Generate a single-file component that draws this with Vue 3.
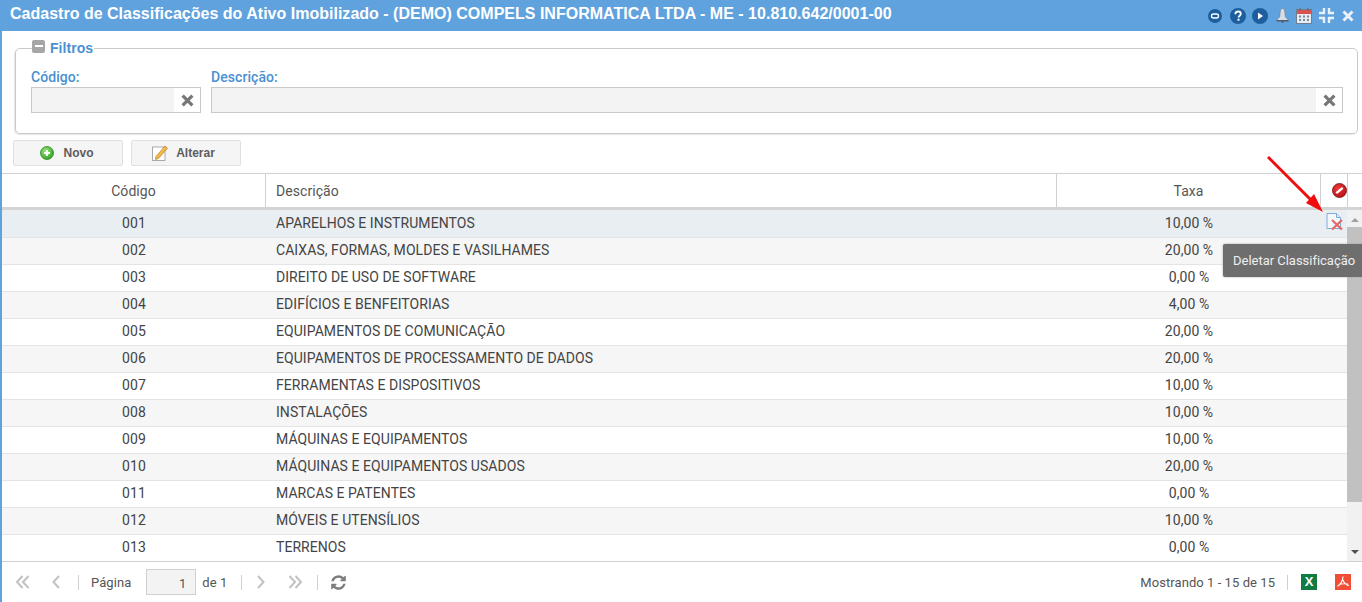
<script setup>
const rows = [
  ['001', 'APARELHOS E INSTRUMENTOS', '10,00 %'],
  ['002', 'CAIXAS, FORMAS, MOLDES E VASILHAMES', '20,00 %'],
  ['003', 'DIREITO DE USO DE SOFTWARE', '0,00 %'],
  ['004', 'EDIFÍCIOS E BENFEITORIAS', '4,00 %'],
  ['005', 'EQUIPAMENTOS DE COMUNICAÇÃO', '20,00 %'],
  ['006', 'EQUIPAMENTOS DE PROCESSAMENTO DE DADOS', '20,00 %'],
  ['007', 'FERRAMENTAS E DISPOSITIVOS', '10,00 %'],
  ['008', 'INSTALAÇÕES', '10,00 %'],
  ['009', 'MÁQUINAS E EQUIPAMENTOS', '10,00 %'],
  ['010', 'MÁQUINAS E EQUIPAMENTOS USADOS', '20,00 %'],
  ['011', 'MARCAS E PATENTES', '0,00 %'],
  ['012', 'MÓVEIS E UTENSÍLIOS', '10,00 %'],
  ['013', 'TERRENOS', '0,00 %']
]
</script>

<template>
  <div class="app">
    <header class="titlebar">
      <h1>Cadastro de Classificações do Ativo Imobilizado - (DEMO) COMPELS INFORMATICA LTDA - ME - 10.810.642/0001-00</h1>
      <div class="tools">
        <svg width="14" height="14" viewBox="0 0 14 14"><circle cx="7" cy="7" r="7" fill="#1d5f9e"/><rect x="3.500" y="5" width="7" height="4" rx="2" fill="none" stroke="#fff" stroke-width="1.300"/></svg>
        <svg width="16" height="16" viewBox="0 0 16 16"><circle cx="8" cy="8" r="8" fill="#1d5f9e"/><path d="M5.300 6.200C5.400 4.400 6.600 3.500 8.100 3.500c1.600 0 2.700 1 2.700 2.300 0 2-2.200 1.900-2.200 3.800" fill="none" stroke="#fff" stroke-width="1.800"/><rect x="7.500" y="10.700" width="2" height="2" fill="#fff"/></svg>
        <svg width="16" height="16" viewBox="0 0 16 16"><circle cx="8" cy="8" r="8" fill="#1d5f9e"/><path d="M6 4.500L11 8 6 11.500z" fill="#fff"/></svg>
        <svg width="13" height="15" viewBox="0 0 13 15"><path d="M6.500 .5c1.400 0 2.100 1 2.300 3l.6 5.500 2.600 2.500v1H1v-1L3.600 9l.6-5.500c.2-2 .9-3 2.300-3z" fill="#d5dde6" stroke="#687c92" stroke-width=".7"/><rect x=".5" y="12" width="12" height="1.500" fill="#4d5d70"/><circle cx="6.500" cy="14" r="1" fill="#4d5d70"/></svg>
        <svg width="16" height="16" viewBox="0 0 16 16"><rect x=".5" y="1.500" width="15" height="14" fill="#e8edf2" stroke="#6f7f92"/><rect x="1" y="2" width="14" height="4" fill="#d9534f"/><path d="M3.500 0h1v3h-1zM11.500 0h1v3h-1z" fill="#5b6b7d"/><path d="M3 7.500h2v2H3zM7 7.500h2v2H7zM11 7.500h2v2h-2zM3 11h2v2H3zM7 11h2v2H7zM11 11h2v2h-2z" fill="#7b8a9b"/></svg>
        <svg width="15" height="15" viewBox="0 0 15 15"><path d="M5 0v5H0M10 0v5h5M5 15v-5H0M10 15v-5h5" fill="none" stroke="#e9f2fb" stroke-width="2.400"/></svg>
        <svg width="12" height="12" viewBox="0 0 12 12"><path d="M1.500 1.500l9 9M10.500 1.500l-9 9" stroke="#e9f2fb" stroke-width="3"/></svg>
      </div>
    </header>

    <main class="content">
      <fieldset class="filters">
        <legend>
          <span class="collapse"><i></i></span>
          <span>Filtros</span>
        </legend>
        <div class="field code">
          <label>Código:</label>
          <div class="input">
            <span class="box"></span>
            <span class="clear"><svg width="13" height="13" viewBox="0 0 12 12"><path d="M1.500 1.500l9 9M10.500 1.500l-9 9" stroke="#777" stroke-width="3"/></svg></span>
          </div>
        </div>
        <div class="field desc">
          <label>Descrição:</label>
          <div class="input">
            <span class="box"></span>
            <span class="clear"><svg width="13" height="13" viewBox="0 0 12 12"><path d="M1.500 1.500l9 9M10.500 1.500l-9 9" stroke="#777" stroke-width="3"/></svg></span>
          </div>
        </div>
      </fieldset>

      <div class="actions">
        <button type="button" class="btn-new">
          <svg width="14" height="14" viewBox="0 0 14 14"><defs><radialGradient id="gn" cx=".4" cy=".35" r=".7"><stop offset="0" stop-color="#9be77f"/><stop offset="1" stop-color="#2f9c22"/></radialGradient></defs><circle cx="7" cy="7" r="6.500" fill="url(#gn)" stroke="#2b8a22" stroke-width=".8"/><path d="M7 4v6M4 7h6" stroke="#fff" stroke-width="2"/></svg>
          <span>Novo</span>
        </button>
        <button type="button" class="btn-edit">
          <svg width="16" height="16" viewBox="0 0 16 16"><rect x=".5" y="2" width="12.500" height="13.500" fill="#fff" stroke="#a9a9a9"/><path d="M4 11.500L13 1l2.500 2.200-9 10.300-3 1z" fill="#f0b94a" stroke="#b77f22" stroke-width=".7"/></svg>
          <span>Alterar</span>
        </button>
      </div>

      <section class="grid">
        <div class="grid-head">
          <div class="c-code">Código</div>
          <div class="c-desc">Descrição</div>
          <div class="c-tax">Taxa</div>
          <div class="c-act"><svg width="15" height="15" viewBox="0 0 15 15"><defs><radialGradient id="rd" cx=".4" cy=".35" r=".75"><stop offset="0" stop-color="#f03a3a"/><stop offset="1" stop-color="#b40d12"/></radialGradient></defs><circle cx="7.500" cy="7.500" r="7" fill="url(#rd)" stroke="#6d1013" stroke-width=".8"/><path d="M4.300 10.200L10.700 4.800" stroke="#fff" stroke-width="2.400"/></svg></div>
          <div class="c-end"></div>
        </div>
        <div class="grid-body">
          <div class="rows">
            <div v-for="(r, i) in rows" :key="r[0]" class="row" :class="{ alt: i % 2 === 1, sel: i === 0 }">
              <div class="c-code">{{ r[0] }}</div>
              <div class="c-desc">{{ r[1] }}</div>
              <div class="c-tax">{{ r[2] }}</div>
              <div class="c-act">
                <svg v-if="i === 0" width="17" height="17" viewBox="0 0 17 17"><path d="M1 .5h9.500l4 4V15.500H1z" fill="#f4f8fd" stroke="#7eaad8"/><path d="M10.500 .5v4h4" fill="#dce9f7" stroke="#7eaad8"/><path d="M6 7l10 9.500M16 7L6 16.500" stroke="#e06a6a" stroke-width="2.300"/></svg>
              </div>
            </div>
          </div>
          <div class="scrollbar">
            <span class="arrow up"></span>
            <span class="thumb"></span>
            <span class="arrow down"></span>
          </div>
        </div>
      </section>

      <footer class="pager">
        <svg class="first" width="16" height="14" viewBox="0 0 16 14"><path d="M7.500 1L2 7l5.500 6M13.500 1L8 7l5.500 6" fill="none" stroke="#c2c2c2" stroke-width="2"/></svg>
        <svg class="prev" width="10" height="14" viewBox="0 0 10 14"><path d="M9 1L3.500 7 9 13" fill="none" stroke="#c2c2c2" stroke-width="2"/></svg>
        <i class="sep s1"></i>
        <span class="lbl">Página</span>
        <span class="page">1</span>
        <span class="de">de 1</span>
        <i class="sep s2"></i>
        <svg class="next" width="10" height="14" viewBox="0 0 10 14"><path d="M2 1L7.500 7 2 13" fill="none" stroke="#c2c2c2" stroke-width="2"/></svg>
        <svg class="last" width="16" height="14" viewBox="0 0 16 14"><path d="M2.500 1L8 7l-5.500 6M8.500 1L14 7l-5.500 6" fill="none" stroke="#c2c2c2" stroke-width="2"/></svg>
        <i class="sep s3"></i>
        <svg width="17" height="17" viewBox="0 0 1792 1792"><path fill="#7d7d7d" d="M1639 1056q0 5-1 7-64 268-268 434.500t-478 166.500q-146 0-282.500-55t-243.500-157l-129 129q-19 19-45 19t-45-19-19-45v-448q0-26 19-45t45-19h448q26 0 45 19t19 45-19 45l-137 137q71 66 161 102t187 36q134 0 250-65t186-179q11-17 53-117 8-23 30-23h192q13 0 22.500 9.500t9.500 22.500zm25-800v448q0 26-19 45t-45 19h-448q-26 0-45-19t-19-45 19-45l138-138q-148-137-349-137-134 0-250 65t-186 179q-11 17-53 117-8 23-30 23h-199q-13 0-22.500-9.500t-9.500-22.500v-7q65-268 270-434.500t480-166.500q146 0 284 55.500t245 156.500l130-129q19-19 45-19t45 19 19 45z"/></svg>
        <span class="showing">Mostrando 1 - 15 de 15</span>
        <i class="sep s4"></i>
        <span class="xls">X</span>
        <span class="pdf"><svg width="16" height="16" viewBox="0 0 16 16"><path d="M8 2.500C8 7 5 11 2.500 12.500M8 6c1 3 3 5 6 5.500M4 10.500c3-1 6-1 9-.5" fill="none" stroke="#fff" stroke-width="1.100"/></svg></span>
      </footer>
    </main>

    <svg class="pointer" width="60" height="60" viewBox="0 0 60 60"><path d="M1 1L46 46" stroke="#f10d0d" stroke-width="3"/><path d="M56 56L39 47l8-9z" fill="#f10d0d"/></svg>
    <div class="tooltip">Deletar Classificação</div>
  </div>
</template>

<style>
html, body { margin: 0; padding: 0; overflow: hidden; }
</style>

<style scoped>
* { box-sizing: border-box; }
.app {
  position: relative;
  width: 1362px;
  height: 602px;
  overflow: hidden;
  background: #fff;
  color: #444;
  font-family: Roboto, "Liberation Sans", sans-serif;
  font-size: 14px;
  letter-spacing: .06px;
  border-left: 2px solid #5fa2dd;
  display: flex;
  flex-direction: column;
}
.titlebar {
  height: 31px;
  margin-left: -2px;
  padding: 0 8px 0 10px;
  background: #5fa2dd;
  display: flex;
  align-items: center;
  justify-content: space-between;
  flex: none;
}
h1 {
  margin: 0;
  font: bold 16px "Liberation Sans", Arial, sans-serif;
  letter-spacing: .01px;
  color: #fff;
  position: relative;
  top: -2px;
}
.tools { display: flex; align-items: center; }
.tools svg:nth-child(1) { margin-right: 8px; }
.tools svg:nth-child(2) { margin-right: 6px; }
.tools svg:nth-child(3) { margin-right: 8px; }
.tools svg:nth-child(4) { margin-right: 7px; }
.tools svg:nth-child(5) { margin-right: 7px; }
.tools svg:nth-child(6) { margin-right: 8px; }
.content { flex: 1; display: flex; flex-direction: column; min-height: 0; }
.filters {
  margin: 9px 4px 0 13px;
  height: 94px;
  padding: 12px 14px 0 15px;
  border: 1px solid #c9c9c9;
  border-radius: 5px;
  display: flex;
  gap: 10px;
  min-width: 0;
  box-shadow: -1px 1px 1px #e6e6e6;
}
legend {
  display: flex;
  align-items: center;
  gap: 5px;
  padding: 0 1px 0 0;
  margin-left: 1px;
  font: bold 14px "Liberation Sans", Arial, sans-serif;
  color: #4a90d2;
  height: 16px;
  line-height: 16px;
}
.collapse {
  width: 13px;
  height: 13px;
  margin-bottom: 4px;
  background: #a6a6a6;
  border-radius: 2px;
  display: flex;
  align-items: center;
  justify-content: center;
}
.collapse i { width: 8px; height: 2px; background: #fff; display: block; }
.field { display: flex; flex-direction: column; }
.code { width: 170px; flex: none; }
.desc { flex: 1; }
label {
  font: 500 14px Roboto, "Liberation Sans", sans-serif;
  color: #4a90d2;
  line-height: 18px;
  height: 19px;
}
.input {
  height: 26px;
  border: 1px solid #c9c9c9;
  display: flex;
  background: #fff;
}
.box { flex: 1; background: #f3f3f3; }
.clear { width: 26px; display: flex; align-items: center; justify-content: center; }
.actions { display: flex; gap: 8px; margin: 6px 0 0 11px; flex: none; }
button {
  width: 110px;
  height: 26px;
  background: #f5f5f5;
  border: 1px solid #e0e0e0;
  border-radius: 2px;
  display: flex;
  align-items: center;
  justify-content: center;
  font: bold 12px "Liberation Sans", Arial, sans-serif;
  color: #5d5d5d;
}
.btn-new { padding: 0 3px 0 0; gap: 10px; }
.btn-edit { padding: 0 5px 0 0; gap: 8px; }
.grid { margin-top: 7px; flex: 1; display: flex; flex-direction: column; min-height: 0; }
.grid-head {
  height: 37px;
  flex: none;
  display: flex;
  border-top: 1px solid #d0d0d0;
  border-bottom: 3px solid #d4d4d4;
  color: #555;
}
.grid-head > div {
  display: flex;
  align-items: center;
  border-right: 1px solid #d0d0d0;
}
.grid-head .c-code, .grid-head .c-tax { justify-content: center; }
.grid-head .c-act { justify-content: flex-end; }
.grid-head .c-end { border-right: 0; flex: 1; }
.c-code { width: 264px; flex: none; text-align: center; }
.c-desc { width: 791px; flex: none; padding-left: 10px; }
.c-tax { width: 264px; flex: none; text-align: center; }
.c-act { width: 27px; flex: none; }
.grid-body { flex: 1; display: flex; min-height: 0; overflow: hidden; }
.rows { width: 1345px; flex: none; overflow: hidden; }
.row {
  height: 27px;
  padding-bottom: 2px;
  display: flex;
  align-items: center;
  border-bottom: 1px solid #e4e4e4;
  color: #444;
}
.row.alt { background: #f6f6f6; }
.row.sel { height: 28px; padding-bottom: 1px; background: #e9eef3; }
.row .c-act { display: flex; justify-content: center; overflow: visible; }
.row .c-act svg { margin-top: -3px; }
.scrollbar {
  width: 15px;
  flex: none;
  background: #f1f1f1;
  display: flex;
  flex-direction: column;
  align-items: center;
  position: relative;
}
.thumb { width: 15px; height: 275px; flex: none; background: #c1c1c1; margin-top: 17px; }
.arrow { position: absolute; width: 0; height: 0; border-left: 4px solid transparent; border-right: 4px solid transparent; }
.up { top: 8px; border-bottom: 4px solid #a0a0a0; }
.down { bottom: 7px; border-top: 4px solid #505050; }
.pager {
  height: 41px;
  flex: none;
  border-top: 1px solid #d0d0d0;
  display: flex;
  align-items: center;
  padding: 0 11px 0 13px;
  color: #555;
  font-size: 13px;
}
.first { margin-right: 19px; }
.prev { margin-right: 18px; }
.sep { width: 1px; height: 15px; background: #cfcfcf; display: block; flex: none; }
.lbl { margin-left: 12px; }
.page {
  width: 50px;
  height: 26px;
  margin-left: 15px;
  border: 1px solid #cfcfcf;
  background: #f3f3f3;
  text-align: right;
  padding: 6px 9px 0 0;
  line-height: 16px;
}
.de { margin-left: 6px; }
.s2 { margin-left: 14px; margin-right: 14px; }
.next { margin-right: 21px; }
.last { margin-right: 14px; }
.s3 { margin-right: 12px; }
.showing { margin-left: auto; }
.s4 { margin: 0 13px 0 12px; }
.xls {
  width: 16px;
  height: 16px;
  background: #107c41;
  color: #fff;
  font: bold 13px/16px "Liberation Sans", Arial, sans-serif;
  text-align: center;
  margin-right: 18px;
}
.pdf { width: 16px; height: 16px; background: #f04e37; display: block; }
.pointer { position: absolute; left: 1265px; top: 156px; }
.tooltip {
  position: absolute;
  left: 1221px;
  top: 244px;
  width: 141px;
  height: 33px;
  padding-left: 10px;
  line-height: 33px;
  background: #6e6e6e;
  color: #eee;
  border-radius: 2px 0 0 2px;
  white-space: nowrap;
  overflow: hidden;
  font-size: 13px;
  letter-spacing: -.02px;
  box-shadow: 0 0 2px #999;
}
</style>
